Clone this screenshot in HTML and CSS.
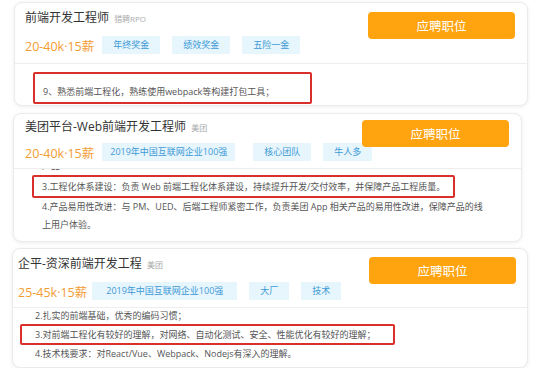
FILE: index.html
```html
<!DOCTYPE html>
<html lang="zh-CN">
<head>
  <meta charset="UTF-8">
  <title>职位列表</title>
  <link rel="stylesheet" href="styles.css">
</head>
<body>
  <main class="jobs">

    <div class="job job-one">
      <div class="job-head">
        <div class="job-info">
          <div class="job-title">前端开发工程师 <span class="company">猎聘RPO</span></div>
          <div class="job-meta">
            <span class="salary">20-40k·15薪</span>
            <span class="tag">年终奖金</span>
            <span class="tag">绩效奖金</span>
            <span class="tag">五险一金</span>
          </div>
        </div>
        <button class="apply">应聘职位</button>
      </div>
      <div class="job-desc">
        <div class="line marked">9、熟悉前端工程化，熟练使用webpack等构建打包工具；</div>
      </div>
    </div>

    <div class="job job-two">
      <div class="job-head">
        <div class="job-info">
          <div class="job-title">美团平台-Web前端开发工程师 <span class="company">美团</span></div>
          <div class="job-meta">
            <span class="salary">20-40k·15薪</span>
            <span class="tag tag-wide">2019年中国互联网企业100强</span>
            <span class="tag">核心团队</span>
            <span class="tag">牛人多</span>
          </div>
        </div>
        <button class="apply">应聘职位</button>
      </div>
      <div class="job-desc">
        <div class="cut"><div class="line clipped">产品</div></div>
        <div class="line marked">3.工程化体系建设：负责 Web 前端工程化体系建设，持续提升开发/交付效率，并保障产品工程质量。</div>
        <div class="line">4.产品易用性改进：与 PM、UED、后端工程师紧密工作，负责美团 App 相关产品的易用性改进，保障产品的线</div>
        <div class="line">上用户体验。</div>
      </div>
    </div>

    <div class="job job-three">
      <div class="job-head">
        <div class="job-info">
          <div class="job-title">企平-资深前端开发工程 <span class="company">美团</span></div>
          <div class="job-meta">
            <span class="salary">25-45k·15薪</span>
            <span class="tag tag-wide">2019年中国互联网企业100强</span>
            <span class="tag">大厂</span>
            <span class="tag">技术</span>
          </div>
        </div>
        <button class="apply">应聘职位</button>
      </div>
      <div class="job-desc">
        <div class="line first">2.扎实的前端基础，优秀的编码习惯；</div>
        <div class="line marked">3.对前端工程化有较好的理解，对网络、自动化测试、安全、性能优化有较好的理解；</div>
        <div class="line">4.技术栈要求：对React/Vue、Webpack、Nodejs有深入的理解。</div>
      </div>
    </div>

  </main>
</body>
</html>
```
FILE: styles.css
```css
body {
  margin: 0;
  background: #fff;
  font-family: "Open Sans", "Noto Sans CJK SC", sans-serif;
  color: #333;
}
.jobs {
  display: flex;
  flex-direction: column;
  padding-top: 2px;
}
.job {
  background: #fff;
  border: 1px solid #ebebeb;
  border-radius: 8px;
  box-shadow: 0 1px 4px rgba(0,0,0,0.07);
  overflow: hidden;
  box-sizing: border-box;
}
.job-one {
  margin-left: 14px;
  width: 514px;
  height: 104px;
}
.job-two {
  margin-top: 7px;
  margin-left: 13px;
  width: 509px;
  height: 129px;
}
.job-three {
  margin-top: 6px;
  margin-left: 12px;
  width: 516px;
  height: 120px;
}

/* head: title, salary, tags, button */
.job-head {
  display: flex;
  justify-content: space-between;
  border-bottom: 1px solid #eee;
  padding: 5px 12px 9px 10px;
}
.job-two .job-head {
  padding: 3px 12px 7px 11px;
}
.job-three .job-head {
  padding: 5px 11px 7px 5px;
}
.job-info {
  flex: 1;
  min-width: 0;
}
.job-title {
  font-size: 12px;
  line-height: 20px;
  color: #333;
  white-space: nowrap;
}
.company {
  font-size: 8px;
  color: #aaa;
  margin-left: 2px;
}
.job-meta {
  display: flex;
  align-items: center;
  margin-top: 7px;
  height: 18px;
  white-space: nowrap;
}
.job-two .job-meta {
  margin-top: 5px;
}
.salary {
  flex-shrink: 0;
  font-size: 12.5px;
  color: #f39c33;
  margin-right: 8px;
}
.job-three .salary {
  margin-right: 5px;
}
.tag {
  flex-shrink: 0;
  font-size: 9px;
  line-height: 18px;
  padding: 0 11px;
  margin-right: 12px;
  background: #e7f5fd;
  color: #3d9ad6;
}
.job-two .tag-wide {
  padding: 0 8px;
  margin-right: 18px;
}
.job-three .tag-wide {
  padding: 0 14px;
}
.apply {
  flex-shrink: 0;
  align-self: flex-start;
  width: 147px;
  height: 27px;
  margin-top: 4px;
  border: none;
  border-radius: 4px;
  background: #ffa30f;
  color: #fff;
  font-family: inherit;
  font-size: 12.5px;
}
.job-two .apply,
.job-three .apply {
  margin-top: 3px;
}

/* description lines */
.job-desc {
  padding-left: 18px;
  font-size: 9px;
  color: #555;
}
.job-one .job-desc {
  padding-top: 8px;
}
.job-three .job-desc {
  padding-left: 7px;
}
.line {
  line-height: 18px;
  padding-left: 10px;
  white-space: nowrap;
}
.job-three .line {
  padding-left: 15px;
}
.cut {
  height: 5px;
  overflow: hidden;
}
.line.clipped {
  margin-top: -13px;
  line-height: 19px;
}
.line.first {
  line-height: 16px;
}
.line.marked {
  width: fit-content;
  border: 2px solid #d9302c;
  border-radius: 2px;
  padding: 0 8px;
  line-height: 18px;
}
.job-one .line.marked {
  padding: 9px 36px 1px 8px;
}
.job-two .line.marked {
  margin-top: 1px;
  line-height: 19px;
}
.job-three .line.marked {
  padding: 0 17px 0 13px;
  line-height: 17px;
}
```
